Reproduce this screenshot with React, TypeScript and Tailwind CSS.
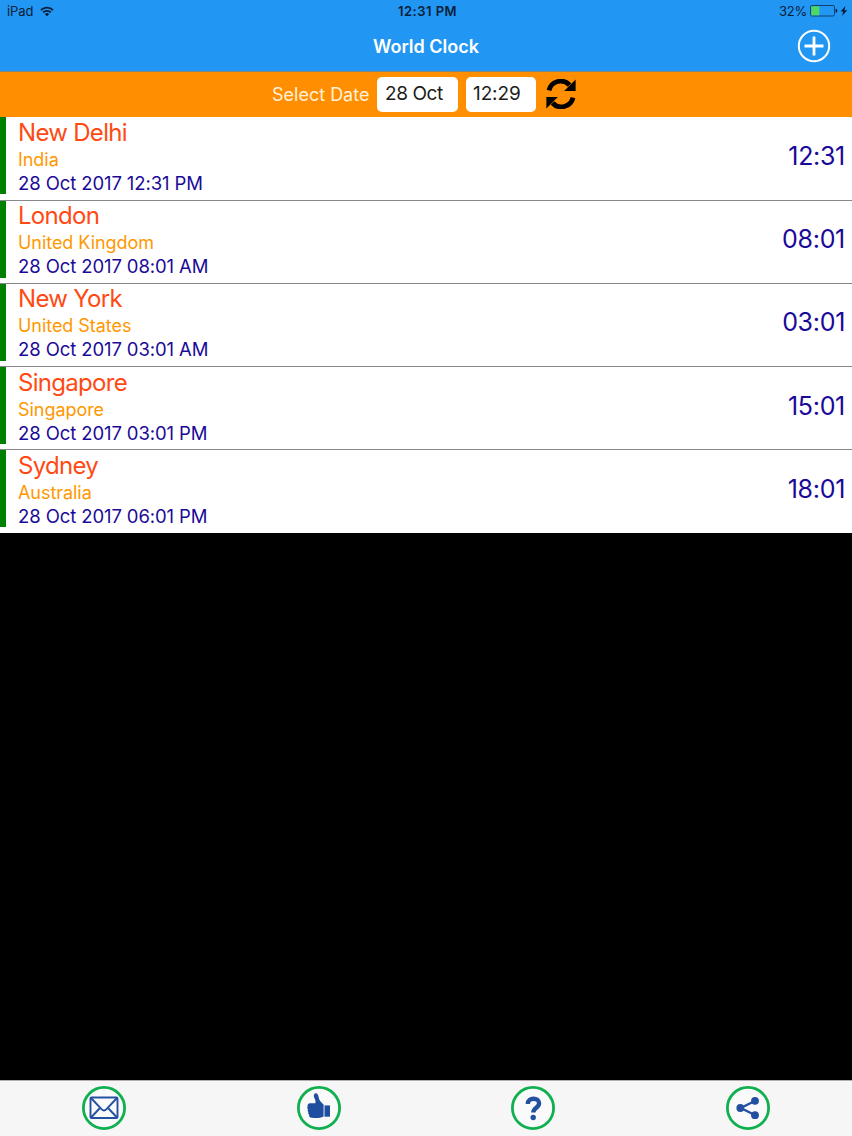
interface City {
  name: string;
  country: string;
  date: string;
  time: string;
}

const cities: City[] = [
  { name: 'New Delhi', country: 'India', date: '28 Oct 2017 12:31 PM', time: '12:31' },
  { name: 'London', country: 'United Kingdom', date: '28 Oct 2017 08:01 AM', time: '08:01' },
  { name: 'New York', country: 'United States', date: '28 Oct 2017 03:01 AM', time: '03:01' },
  { name: 'Singapore', country: 'Singapore', date: '28 Oct 2017 03:01 PM', time: '15:01' },
  { name: 'Sydney', country: 'Australia', date: '28 Oct 2017 06:01 PM', time: '18:01' }
];

const StatusBar = () => (
  <div className="grid h-[22px] grid-cols-3 items-center px-[7px] text-[13px] leading-none text-[#0b2038]">
    <div className="flex items-center gap-[7px]">
      <span className="tracking-[-0.1px]">iPad</span>
      <svg width="14" height="11" viewBox="0 0 15 11" fill="none" stroke="#071c33" strokeWidth="2">
        <path d="M1 4.1a9.2 9.2 0 0 1 13 0" />
        <path d="M3.3 6.5a6 6 0 0 1 8.4 0" />
        <path d="M7.5 10.6 5.2 8.2a3.3 3.3 0 0 1 4.6 0z" fill="#071c33" stroke="none" />
      </svg>
    </div>
    <span className="pl-[3px] text-center text-[13px] font-semibold tracking-[0.5px]">12:31 PM</span>
    <div className="flex items-center justify-end">
      <span className="mr-[3px] tracking-[-0.2px]">32%</span>
      <svg width="28" height="12" viewBox="0 0 28 12">
        <rect x="0.5" y="0.5" width="24" height="10.5" rx="1.5" fill="none" stroke="#12426f" />
        <rect x="1.3" y="1.3" width="8" height="9" fill="#4cd964" />
        <path d="M25.6 3.8q1.8.6 1.8 2t-1.8 2z" fill="#071c33" />
      </svg>
      <svg className="-mr-[3px] ml-[2px]" width="8" height="10" viewBox="0 0 8 10">
        <path d="M5.4 0 .6 5.4h2.7L2 10l5.2-5.7H4.4z" fill="#071c33" />
      </svg>
    </div>
  </div>
);

const Header = () => (
  <header className="h-[71px] bg-[#2196f3]">
    <StatusBar />
    <div className="grid h-[48px] grid-cols-3 items-center pr-[21px]">
      <span />
      <h1 className="pt-px pl-[21px] text-center text-[18px] font-semibold text-white">World Clock</h1>
      <button className="justify-self-end" aria-label="Add city">
        <svg width="34" height="34" viewBox="0 0 34 34" fill="none" stroke="#fff">
          <circle cx="17" cy="17" r="15.2" strokeWidth="2" />
          <path d="M17 7.5v19M7.5 17h19" strokeWidth="2.8" />
        </svg>
      </button>
    </div>
  </header>
);

const DateBar = () => (
  <div className="flex h-[46.4px] items-center border-t border-[#85877a] bg-[#ff8f00] pb-px pl-[272px]">
    <span className="w-[105px] text-[18px] text-[#fff0d9]">Select Date</span>
    <div className="flex h-[35px] w-[81px] items-center rounded-[5px] bg-white pl-2 text-[19px] tracking-[-0.4px] text-[#1c1c1c]">
      28 Oct
    </div>
    <div className="ml-2 flex h-[35px] w-[70px] items-center rounded-[5px] bg-white pl-[7px] text-[19px] tracking-[-0.1px] text-[#1c1c1c]">
      12:29
    </div>
    <svg className="ml-[10px]" width="30" height="30" viewBox="0 0 30 30">
      <path d="M3 11.4A12 12 0 0 1 23.5 6" fill="none" stroke="#000" strokeWidth="4.8" />
      <path d="M29.6.6V12H18.2z" />
      <path d="M27 18.6A12 12 0 0 1 6.5 24" fill="none" stroke="#000" strokeWidth="4.8" />
      <path d="M.4 29.4V18h11.4z" />
    </svg>
  </div>
);

const CityRow = ({ city }: { city: City }) => (
  <li className="flex h-[83.2px] border-b border-[#8a878c] bg-white pr-[7px] last:border-b-0">
    <div className="h-[77px] w-[5.5px] bg-[#008000]" />
    <div className="flex-1 pt-[0.6px] pl-[12.5px]">
      <p className="h-[30px] text-[24px] leading-[30px] tracking-[-0.7px] text-[#ff4a14]">{city.name}</p>
      <p className="h-[23px] text-[18px] leading-[24px] tracking-[-0.05px] text-[#ff9800]">{city.country}</p>
      <p className="h-[24px] text-[18.5px] leading-[25px] tracking-[-0.1px] text-[#1a0a98]">{city.date}</p>
    </div>
    <span className="pt-[23.6px] text-[25px] leading-[31px] tracking-[-0.3px] text-[#1a0a98]">{city.time}</span>
  </li>
);

const MailIcon = () => (
  <g fill="none" stroke="#2450a0" strokeWidth="1.9">
    <rect x="8.5" y="11.5" width="27" height="20.5" rx="1" />
    <path d="m9 12 10.5 11.2q2.5 2.5 5 0L35 12M9 31.5l8.5-9M35 31.5l-8.5-9" />
  </g>
);

const LikeIcon = () => (
  <g fill="#1f4e9e">
    <path d="M17.2 8.2c.8-1.4 3-1 3.8.7.9 1.8.8 4 1.8 5.6.9 1.5 2.4 2.7 3.8 3.9v12c-2.4 1-5 1.5-7.8 1.5-2.7 0-5.6-.1-6.4-1.2-.5-.8-.1-1.6-.4-2.2-.8-.6-1-1.6-.6-2.5-.8-.8-.9-1.9-.4-2.8-.9-1-1-2-.4-2.8-.3-2 .9-3 2.5-3.1l5.2-.1c.5-1.6.3-2.8-.6-4.5-.8-1.6-1.3-3.2-.5-4.5z" />
    <path d="M27.5 19.4H33v11.3h-5.5z" />
  </g>
);

const HelpIcon = () => (
  <g>
    <path
      d="M16.8 18c0-7 11.3-6.9 11.3-.7 0 4.5-5.8 4.3-5.8 9.2"
      fill="none"
      stroke="#2450a0"
      strokeWidth="4.4"
    />
    <circle cx="22.2" cy="31.5" r="2.7" fill="#2450a0" />
  </g>
);

const ShareIcon = () => (
  <g fill="#2450a0">
    <path d="M28.8 15 14.8 22l14 7" fill="none" stroke="#2450a0" strokeWidth="2.4" />
    <circle cx="14.3" cy="22" r="3.9" />
    <circle cx="29" cy="14.8" r="3.9" />
    <circle cx="29" cy="29.2" r="3.9" />
  </g>
);

const actions = [
  { label: 'Mail', Icon: MailIcon },
  { label: 'Like', Icon: LikeIcon },
  { label: 'Help', Icon: HelpIcon },
  { label: 'Share', Icon: ShareIcon }
];

const App = () => (
  <div className="flex h-screen w-full flex-col overflow-hidden bg-black font-['Inter',sans-serif]">
    <Header />
    <DateBar />
    <ul>
      {cities.map((city) => (
        <CityRow key={city.name} city={city} />
      ))}
    </ul>
    <footer className="mt-auto flex h-[56px] items-center justify-between border-t border-[#b5aeb0] bg-[#f6f6f6] px-[82px] pb-px">
      {actions.map(({ label, Icon }) => (
        <button key={label} aria-label={label}>
          <svg width="44" height="44" viewBox="0 0 44 44">
            <circle cx="22" cy="22" r="20.6" fill="#fafafa" stroke="#10b050" strokeWidth="2.8" />
            <Icon />
          </svg>
        </button>
      ))}
    </footer>
  </div>
);

export default App;
